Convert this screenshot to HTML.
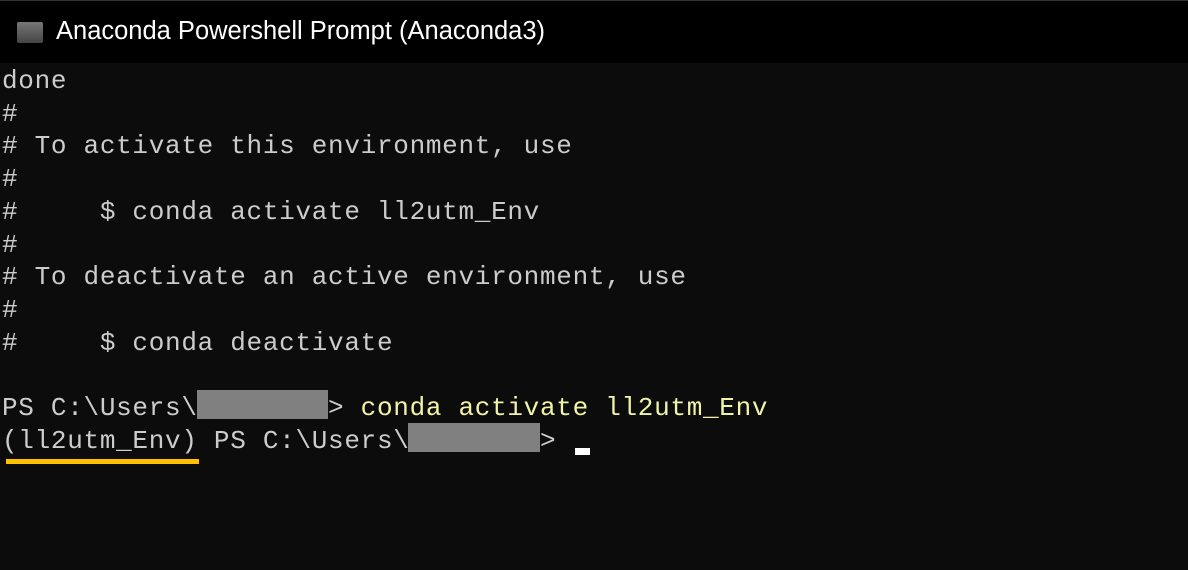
<!DOCTYPE html>
<html><head><style>
html,body{margin:0;padding:0;width:1188px;height:570px;overflow:hidden;background:#0c0c0c}
.title{position:absolute;left:0;top:0;width:1188px;height:63px;background:#000;border-top:1px solid #333;box-sizing:border-box}
.title span{position:absolute;left:56px;top:16px;font:25.5px "Liberation Sans",sans-serif;color:#fff}
.icon{position:absolute;left:17px;top:21px;width:26px;height:21px;background:linear-gradient(#777,#444);border-radius:2px}
.term{position:absolute;left:2px;top:65px;font:26px/32.7px "Liberation Mono",monospace;letter-spacing:0.7px;color:#cccccc;white-space:pre}
.y{color:#f2f2a8}
.box{position:absolute;background:#808080}
</style></head><body>
<div class="title"><div class="icon"></div><span>Anaconda Powershell Prompt (Anaconda3)</span></div>
<div class="term">done
#
# To activate this environment, use
#
#     $ conda activate ll2utm_Env
#
# To deactivate an active environment, use
#
#     $ conda deactivate

PS C:\Users\        > <span class="y">conda activate ll2utm_Env</span>
(ll2utm_Env) PS C:\Users\        > </div>
<div class="box" style="left:197px;top:390px;width:131px;height:29px"></div>
<div class="box" style="left:408px;top:423px;width:132px;height:29px"></div>
<div style="position:absolute;left:6px;top:459px;width:193px;height:5px;background:#ffc000"></div>
<div style="position:absolute;left:575px;top:448px;width:15px;height:7px;background:#fff"></div>
</body></html>
